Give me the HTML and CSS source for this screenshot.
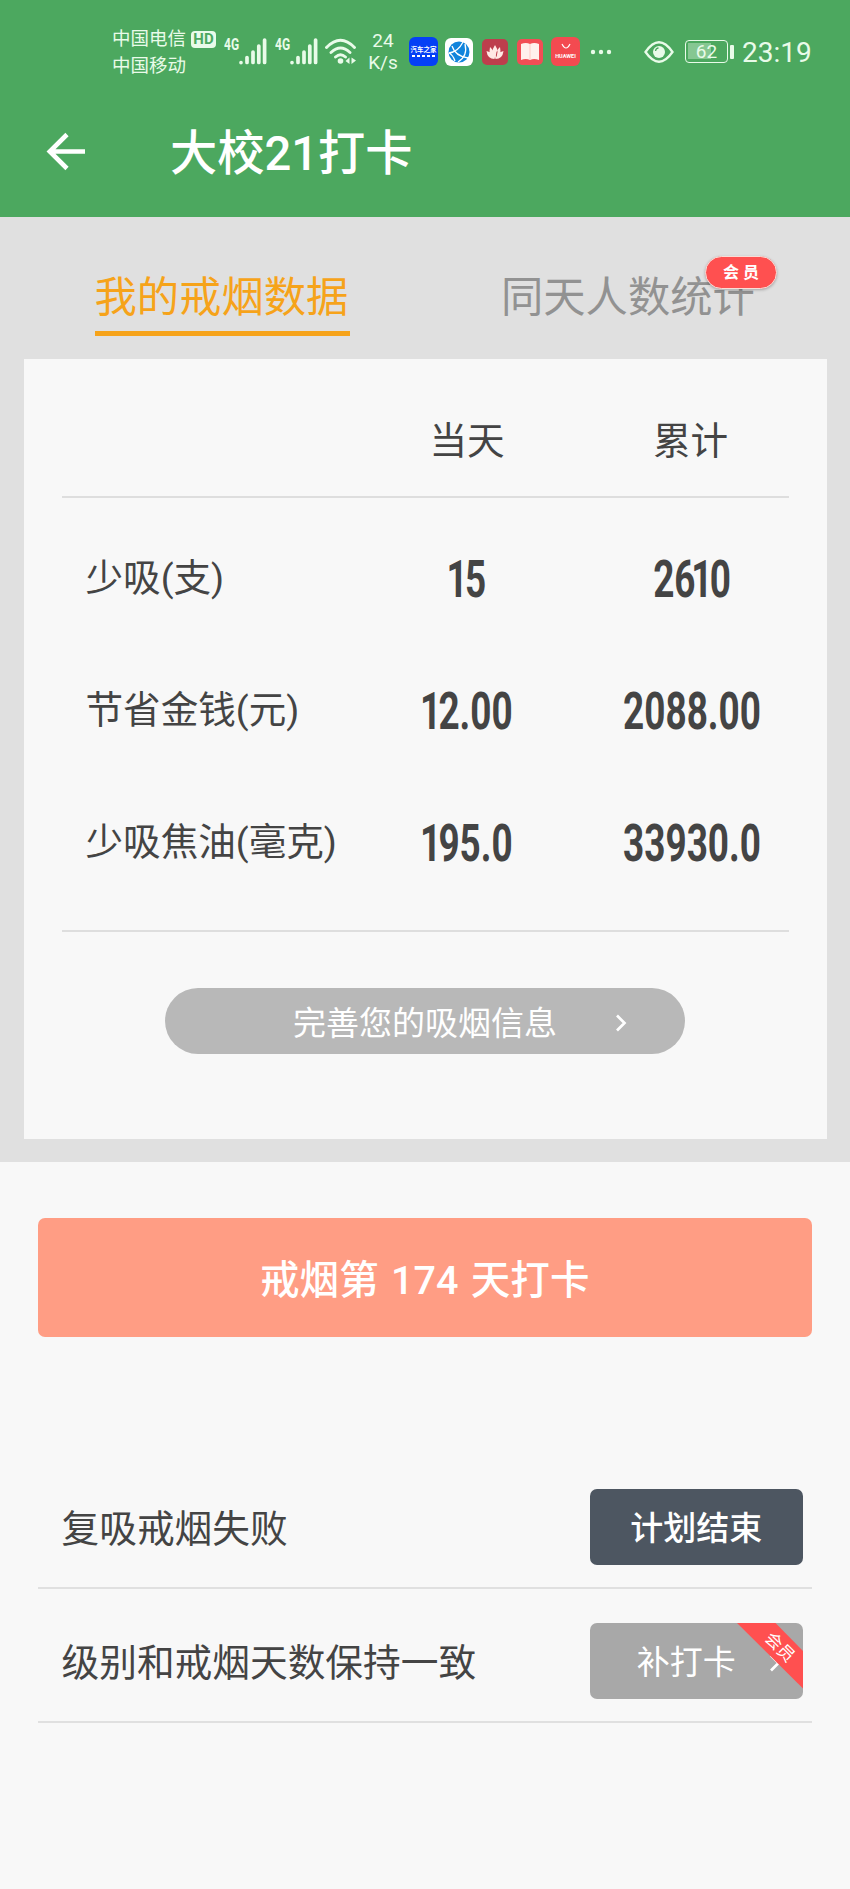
FILE: index.html
```html
<!DOCTYPE html>
<html lang="zh-CN">
<head>
<meta charset="utf-8">
<title>大校21打卡</title>
<link rel="stylesheet" href="styles.css">
</head>
<body>
<header class="top">
  <div class="status">
    <div class="carriers"><div class="carrier">中国电信<span class="hd">HD</span></div><div class="carrier">中国移动</div></div>
    <div class="signal"><span class="gen">4G</span><svg width="28" height="27" viewBox="0 0 28 27" stroke="#e9fbe9" stroke-width="3.7" stroke-linecap="round"><path d="M2 24.5v.1M8 19.500v5M14 14v10.500M19.800 8v16.500M25.600 2v22.500"/></svg></div>
    <div class="signal second"><span class="gen">4G</span><svg width="28" height="27" viewBox="0 0 28 27" stroke="#e9fbe9" stroke-width="3.7" stroke-linecap="round"><path d="M2 24.5v.1M8 19.500v5M14 14v10.500M19.800 8v16.500M25.600 2v22.500"/></svg></div>
    <svg class="wifi" width="32" height="27" viewBox="0 0 32 27" fill="none" stroke="#e9fbe9" stroke-width="2.900" stroke-linecap="round"><path d="M1.500 9.500Q15.500-5 29.500 9.500M6 14.500q9.500-9 19 0M10.500 19q5-4.500 10 0"/><circle cx="15.500" cy="23" r="2.800" fill="#e9fbe9" stroke="none"/><path d="M20.500 23l4-3.500v6.500zM26.500 19.500v6.500l4.500-3.500z" fill="#e9fbe9" stroke="none"/></svg>
    <div class="speed"><div>24</div><div>K/s</div></div>
    <div class="apps">
      <div class="app auto"><b>汽车之家</b><i></i></div>
      <svg width="28" height="28" viewBox="0 0 28 28"><rect width="28" height="28" rx="6" fill="#fff"/><circle cx="14" cy="14" r="10.500" fill="#1184dc"/><g fill="none" stroke="#fff" stroke-width="1.300"><path d="M4 15Q13 14 18 4M7 8Q10 18 23 20M13 24Q23 18 20 6M4 15Q8 17 10 23"/></g></svg>
      <svg class="lotus" width="26" height="26" viewBox="0 0 26 26"><rect width="26" height="26" rx="5" fill="#bd3e4c"/><g fill="#ffe9e5"><path d="M13 6q5 7 0 14q-5-7 0-14M8 8q5 4 4 12q-6-3-4-12M18 8q-5 4-4 12q6-3 4-12M4.500 12q6 1 8 8q-7 0-8-8M21.500 12q-6 1-8 8q7 0 8-8"/></g></svg>
      <svg class="book" width="26" height="26" viewBox="0 0 26 26"><rect width="26" height="26" rx="5" fill="#f24d55"/><path d="M4 5q5-2 9 0q4-2 9 0v16q-5-2-9 0q-4-2-9 0z" fill="#fff0ed"/><path d="M13 5v16" stroke="#ffc9c4"/></svg>
      <div class="app huawei"><svg width="12" height="7" viewBox="0 0 12 7"><path d="M2 1q4 8 8 0" fill="none" stroke="#fff" stroke-width="1.200"/></svg><b>HUAWEI</b></div>
    </div>
    <svg class="dots" width="22" height="6" viewBox="0 0 22 6" fill="#e9fbe9"><circle cx="3" cy="3" r="2.200"/><circle cx="11" cy="3" r="2.200"/><circle cx="19" cy="3" r="2.200"/></svg>
    <svg class="eye" width="30" height="22" viewBox="0 0 30 22" fill="none" stroke="#e9fbe9"><path d="M1.500 11Q15-8.500 28.500 11Q15 30.500 1.500 11z" stroke-width="2.300"/><circle cx="15" cy="11" r="6" fill="#e9fbe9" stroke="none"/><path d="M11.500 10q.5-3 3-3" stroke="#4ca85f" stroke-width="1.300"/></svg>
    <div class="battery"><span>62</span></div><i class="battery-tip"></i>
    <div class="clock">23:19</div>
  </div>
  <div class="bar">
    <svg class="back" width="40" height="40" viewBox="0 0 40 40" fill="none" stroke="#fff" stroke-width="4.600"><path d="M21 2.500L3.800 19.500L21 36.500M3.800 19.500H39"/></svg>
    <h1>大校21打卡</h1>
  </div>
</header>
<section class="panel">
  <nav class="tabs">
    <div class="tab active"><span>我的戒烟数据</span></div>
    <div class="tab"><span>同天人数统计</span><em class="vip">会 员</em></div>
  </nav>
  <div class="card">
    <div class="row head"><span></span><span>当天</span><span>累计</span></div>
    <div class="rows">
      <div class="row"><span>少吸(支)</span><b><u class="one">1</u>5</b><b>26<u class="one">1</u>0</b></div>
      <div class="row"><span>节省金钱(元)</span><b><u class="one">1</u>2.00</b><b>2088.00</b></div>
      <div class="row"><span>少吸焦油(毫克)</span><b><u class="one">1</u>95.0</b><b>33930.0</b></div>
    </div>
    <div class="pill"><span>完善您的吸烟信息</span><svg width="12" height="18" viewBox="0 0 12 18"><path d="M2 1.500L9.500 9L2 16.500" fill="none" stroke="#fff" stroke-width="2.700"/></svg></div>
  </div>
</section>
<main>
  <div class="checkin">戒烟第 174 天打卡</div>
  <div class="action"><span>复吸戒烟失败</span><div class="btn dark">计划结束</div></div>
  <div class="action"><span>级别和戒烟天数保持一致</span><div class="btn gray">补打卡<svg class="chev" width="12" height="18" viewBox="0 0 12 18"><path d="M2 1.500L9.500 9L2 16.500" fill="none" stroke="#fff" stroke-width="2.700"/></svg><svg class="ribbon" width="66" height="66" viewBox="0 0 66 66"><path d="M0 0H38.500L66 28V65.500z" fill="#ff5050"/></svg><em class="ribbon-text">会员</em></div></div>
</main>
</body>
</html>
```
FILE: styles.css
```css
* { box-sizing: border-box; }
body { margin: 0; width: 850px; height: 1889px; overflow: hidden; background: #f8f8f8; color: #444; font-family: Roboto, "Noto Sans CJK SC", sans-serif; }
svg { display: block; flex: none; }
em, i { font-style: normal; }
u { text-decoration: none; }

.top { height: 217px; background: #4ca85f; color: #e9fbe9; }
.status { display: flex; align-items: center; height: 103px; padding-left: 112px; }
.carriers { width: 112px; padding-top: 3px; font-size: 18.5px; line-height: 27px; flex: none; }
.carrier { display: flex; align-items: center; white-space: nowrap; }
.hd { width: 25px; height: 17px; margin: -1px 0 0 5px; border-radius: 4px; background: #e9fbe9; color: #4ca85f; font: 700 15px/17px Roboto, sans-serif; text-align: center; }
.signal { display: flex; width: 51px; height: 27px; flex: none; }
.signal svg { margin-left: -1px; }
.gen { width: 16px; height: 14px; font: 700 16px/13px Roboto, sans-serif; transform: scaleX(.75); transform-origin: left; }
.wifi { margin-left: -1px; }
.speed { width: 46px; margin-left: 3px; margin-right: 1px; font-size: 19px; line-height: 22px; text-align: center; flex: none; }
.apps { display: flex; align-items: center; margin-left: 2px; }
.apps > svg { margin-left: 7px; }
.apps > .lotus, .apps > .book { margin-left: 9px; }
.app { display: flex; flex-direction: column; align-items: center; justify-content: center; width: 29px; height: 29px; border-radius: 6px; color: #fff; overflow: hidden; white-space: nowrap; flex: none; }
.auto { background: #0540f5; }
.auto b { font-size: 6.5px; line-height: 8px; }
.auto i { width: 24px; height: 2px; margin-top: 1px; background: repeating-linear-gradient(90deg, #fff 0 3px, #0540f5 3px 5px); }
.huawei { margin-left: 8px; background: #f34a50; }
.huawei b { font-size: 5.5px; line-height: 8px; margin-top: 2px; }
.dots { margin-left: 10px; }
.eye { margin-left: 32px; }
.battery { width: 43px; height: 23px; margin-left: 11px; padding: 2px; border: 1.5px solid #e9fbe9; border-radius: 4px; flex: none; }
.battery span { display: block; height: 16px; background: linear-gradient(90deg, #86c792 62%, transparent 62%); font-size: 19px; line-height: 17px; text-align: center; }
.battery-tip { width: 4px; height: 14px; margin-left: 2px; border-radius: 1px; background: #e9fbe9; }
.clock { margin-left: 8px; padding-top: 2px; font-size: 28px; line-height: 32px; }
.bar { display: flex; align-items: center; height: 98px; padding-left: 46px; color: #fff; }
h1 { margin: 0 0 0 84px; padding-top: 4px; font-size: 47.2px; line-height: 60px; font-weight: 500; }

.panel { height: 945px; padding: 0 23.500px; background: #e0e0e0; }
.tabs { display: flex; height: 141.500px; padding-top: 50px; }
.tab { position: relative; margin-left: 71px; width: 255px; height: 69px; font-size: 42.3px; line-height: 62px; color: #929292; white-space: nowrap; }
.tab + .tab { margin-left: 151.500px; }
.active { color: #f6a31a; border-bottom: 5px solid #f6a31a; }
.vip { position: absolute; left: 204px; top: -11px; width: 72px; height: 33px; border: 1.500px solid #fbdcd6; border-radius: 17px; background: #ff5050; box-shadow: 0 1px 3px #0004; color: #fff; font-size: 16px; line-height: 32px; font-weight: 700; text-align: center; }
.card { height: 780px; padding: 0 38px; background: #f8f8f8; }
.row { display: grid; grid-template-columns: 270px 223px 224px; align-items: center; height: 132px; padding-left: 24px; font-size: 37.6px; line-height: 50px; white-space: nowrap; }
.row > :not(:first-child) { text-align: center; }
.head { height: 139px; padding-top: 27px; border-bottom: 2px solid #dedede; }
.rows { padding: 14px 0 22px; border-bottom: 2px solid #dedede; }
.row b { padding-top: 4px; font-size: 52px; font-weight: 700; transform: translateX(1px) scaleX(.71); }
.one { margin: 0 -4px 0 -6px; }
.pill { display: flex; align-items: center; justify-content: center; position: relative; width: 520px; height: 66px; margin: 56px auto 0; border-radius: 33px; background: #b8b8b8; color: #fff; font-size: 33px; }
.pill svg { position: absolute; left: 450px; top: 26px; }

main { padding: 56px 38px 0 37.500px; }
.checkin { height: 119px; border-radius: 7px; background: #ff9d84; color: #fff; font-size: 39.5px; line-height: 125px; font-weight: 500; letter-spacing: .1px; word-spacing: 2.200px; text-align: center; margin-bottom: 118px; }
.action { display: flex; align-items: center; justify-content: space-between; height: 134px; padding: 12px 9.500px 0 24px; border-bottom: 2px solid #e0e0e0; font-size: 37.7px; }
.action > span { margin-bottom: 3px; }
.btn { position: relative; width: 212.500px; height: 76px; border-radius: 7px; color: #fff; font-size: 33px; line-height: 80px; text-align: center; overflow: hidden; }
.dark { background: #4d5661; font-weight: 500; }
.gray { background: #a8a8a8; padding-right: 20px; }
.chev { position: absolute; left: 179px; top: 31px; }
.ribbon { position: absolute; right: 0; top: 0; }
.ribbon-text { position: absolute; left: 170px; top: 14px; width: 40px; font-size: 17px; line-height: 20px; transform: rotate(45deg); }
```
